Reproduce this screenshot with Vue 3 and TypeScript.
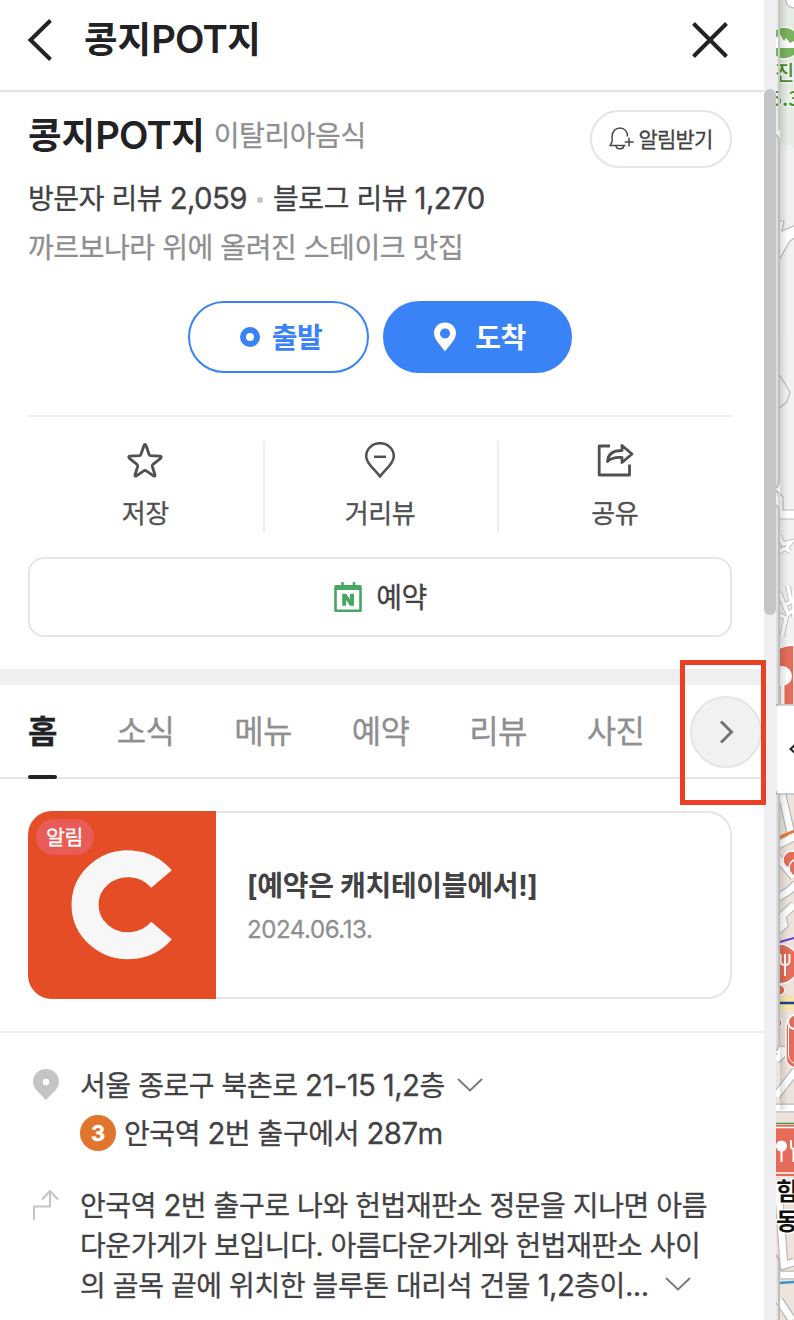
<script setup lang="ts">
import { h } from 'vue'

interface Tab {
  label: string
  active?: boolean
}

const latin = /([0-9A-Za-z][0-9A-Za-z,\-]*|\.{3})/

/** Text whose digits and Latin letters are set slightly larger than the Hangul. */
const Mixed = (props: { text: string }) =>
  h(
    'span',
    { class: 'mixed' },
    props.text
      .split(latin)
      .filter(Boolean)
      .map((part) => (latin.test(part) ? h('span', { class: 'latin' }, part) : part)),
  )
Mixed.props = ['text']

const placeName = '콩지POT지'

const tabs: Tab[] = [
  { label: '홈', active: true },
  { label: '소식' },
  { label: '메뉴' },
  { label: '예약' },
  { label: '리뷰' },
  { label: '사진' },
]

const directions: string[] = [
  '안국역 2번 출구로 나와 헌법재판소 정문을 지나면 아름',
  '다운가게가 보입니다. 아름다운가게와 헌법재판소 사이',
  '의 골목 끝에 위치한 블루톤 대리석 건물 1,2층이...',
]
</script>

<template>
  <div class="screen">
    <main class="panel">
      <header class="header">
        <svg class="back" width="28" height="44" viewBox="0 0 28 44">
          <path d="M24.500 2.500 4.500 22l20 19.500" fill="none" stroke="#222225" stroke-width="4" />
        </svg>
        <h1 class="name"><Mixed :text="placeName" /></h1>
        <svg class="close" width="36" height="36" viewBox="0 0 36 36">
          <path d="M1.5 1.5l33 33M34.5 1.5l-33 33" fill="none" stroke="#222225" stroke-width="4" />
        </svg>
      </header>

      <section class="summary">
        <div class="title-row">
          <h2 class="name"><Mixed :text="placeName" /></h2>
          <span class="category">이탈리아음식</span>
          <button class="notify">
            <svg width="26" height="26" viewBox="0 0 26 26" fill="none" stroke="#48484b" stroke-width="1.5">
              <path d="M18.6 10.5C18.4 5.2 15.300 2 10.900 2S3.200 5.300 3.100 10.500V15.500L1.200 19.400H16.500" />
              <path d="M7 19.800c.5 4 7.300 4 7.800 0M20 11.800v8.600M15.700 16.100h9" />
            </svg>
            <span>알림받기</span>
          </button>
        </div>
        <p class="reviews">
          <Mixed text="방문자 리뷰 2,059" /><i class="dot"></i><Mixed text="블로그 리뷰 1,270" />
        </p>
        <p class="intro">까르보나라 위에 올려진 스테이크 맛집</p>
        <div class="routes">
          <button class="route depart">
            <svg width="20" height="20" viewBox="0 0 20 20">
              <circle cx="10" cy="10" r="7" fill="none" stroke="#3a83f7" stroke-width="6" />
            </svg>
            <span>출발</span>
          </button>
          <button class="route arrive">
            <svg width="24" height="30" viewBox="0 0 24 30">
              <path d="M12 .5C5.700.5 1 5.200 1 11.200 1 17.500 8 23.500 12 29.500 16 23.500 23 17.500 23 11.200 23 5.200 18.300.5 12 .5Z" fill="#fff" />
              <circle cx="12" cy="11.500" r="5" fill="#3a83f7" />
            </svg>
            <span>도착</span>
          </button>
        </div>
      </section>

      <section class="actions">
        <div class="action">
          <svg width="36" height="36" viewBox="0 0 36 36" fill="none" stroke="#505053" stroke-width="2.800" stroke-linejoin="round">
            <path d="M18 2.500Q18.700 2.500 19.200 4L22 12.300Q22.400 13.600 23.700 13.700L33 14.200Q35.200 14.600 33.600 16.300L26 22.300Q25 23 25.300 24.300L28 33Q28.200 34.600 26.600 33.900L19.200 28.800Q18 28.200 16.800 28.800L9.400 33.900Q7.800 34.600 8 33L10.700 24.300Q11 23 10 22.300L2.400 16.300Q.8 14.600 3 14.200L12.300 13.700Q13.600 13.600 14 12.300L16.800 4Q17.300 2.500 18 2.500Z" />
          </svg>
          <span>저장</span>
        </div>
        <div class="action">
          <svg width="36" height="36" viewBox="0 0 36 36" fill="none" stroke="#505053" stroke-width="2.500">
            <path d="M18 1.200C10 1.200 4.200 7 4.200 14.400 4.200 21.800 13 27.500 18 34.500 23 27.500 31.800 21.800 31.800 14.400 31.800 7 26 1.200 18 1.200Z" />
            <path d="M12 14.800h12" />
          </svg>
          <span>거리뷰</span>
        </div>
        <div class="action">
          <svg width="38" height="36" viewBox="0 0 38 36" fill="none" stroke="#505053" stroke-width="2.800" stroke-linejoin="round">
            <path d="M14 4H3.200v29H33.500V22.500" />
            <path d="M26 3.500 36 12 26 20.500v-5C19.500 15 15 16 11.500 19.500 12 12.500 17 8.500 26 8.500Z" />
          </svg>
          <span>공유</span>
        </div>
      </section>

      <button class="booking">
        <svg width="28" height="32" viewBox="0 0 28 32">
          <path d="M1.500 6h25v23.700h-25Z" fill="#fff" stroke="#4aa663" stroke-width="2.600" stroke-linejoin="round" />
          <path d="M1 4h26v5H1Z" fill="#4aa663" />
          <path d="M8.500 1v4M20 1v4" stroke="#4aa663" stroke-width="2.500" />
          <path d="M8.200 12.700h4l3.800 5.600v-5.600h4v12h-4l-3.800-5.600v5.600h-4Z" fill="#4aa663" />
        </svg>
        <span>예약</span>
      </button>

      <nav class="tabs">
        <a v-for="tab in tabs" :key="tab.label" class="tab" :class="{ active: tab.active }"><span>{{ tab.label }}</span></a>
        <button class="next">
          <svg width="16" height="26" viewBox="0 0 16 26">
            <path d="M3 2.500 13.500 13 3 23.500" fill="none" stroke="#747477" stroke-width="3" />
          </svg>
        </button>
        <div class="highlight"></div>
      </nav>

      <section class="notice">
        <article class="card">
          <div class="thumb">
            <svg width="188" height="188" viewBox="0 0 188 188">
              <path d="M133.500 68A43 41 0 1 0 133.500 119.500" fill="none" stroke="#f7f7f7" stroke-width="27" />
            </svg>
            <span class="badge">알림</span>
          </div>
          <div class="card-body">
            <strong>[예약은 캐치테이블에서!]</strong>
            <time>2024.06.13.</time>
          </div>
        </article>
      </section>

      <section class="info">
        <div class="row">
          <svg class="lead" width="36" height="36" viewBox="0 0 36 36">
            <path d="M18 2C10.500 2 5 7.500 5 14.700 5 22 13 27 18 33.300 23 27 31 22 31 14.700 31 7.500 25.500 2 18 2Z" fill="#c5c5c8" />
            <circle cx="18" cy="15" r="3.200" fill="#fff" />
          </svg>
          <div class="lines">
            <p class="line address">
              <Mixed text="서울 종로구 북촌로 21-15 1,2층" />
              <svg width="26" height="16" viewBox="0 0 26 16"><path d="M1 2l12 11.500L25 2" fill="none" stroke="#77777a" stroke-width="1.800" /></svg>
            </p>
            <p class="line station"><b>3</b><Mixed text="안국역 2번 출구에서 287m" /></p>
          </div>
        </div>
        <div class="row guide">
          <svg class="lead" width="36" height="36" viewBox="0 0 36 36" fill="none" stroke="#c5c5c8" stroke-width="2">
            <path d="M6 34V20.500H22V5M14 13.500l8-8.500L30 13.500" />
          </svg>
          <div class="lines">
            <p v-for="(text, i) in directions" :key="text" class="line">
              <Mixed :text="text" />
              <svg v-if="i === directions.length - 1" width="26" height="16" viewBox="0 0 26 16"><path d="M1 2l12 11.500L25 2" fill="none" stroke="#77777a" stroke-width="1.800" /></svg>
            </p>
          </div>
        </div>
      </section>
    </main>

    <div class="scrollbar"><div class="thumb-bar"></div></div>

    <svg class="map" width="18" height="1320" viewBox="0 0 18 1320">
      <defs>
        <linearGradient id="edge" x1="0" x2="1" y1="0" y2="0">
          <stop offset="0" stop-color="#000" stop-opacity=".13" />
          <stop offset="1" stop-color="#000" stop-opacity="0" />
        </linearGradient>
      </defs>
      <rect width="18" height="1320" fill="#f1f2f0" />
      <path d="M0 0H18V148l-4-4-5 2-5-4-4 3Z" fill="#e5ede4" />
      <rect y="340" width="18" height="330" fill="#f2f2f2" />
      <rect y="790" width="18" height="530" fill="#ede3da" />
      <circle cx="18" cy="0" r="8" fill="#fff" stroke="#aaa" />
      <circle cx="8" cy="43" r="16" fill="#78b35b" stroke="#fff" stroke-width="1.500" />
      <path d="M0 48V38l4-4 4 7 2-3 4 5 4-2v7Z" fill="#fff" />
      <g class="park" stroke="#f4f8f2" stroke-width="3" paint-order="stroke">
        <text x="-1" y="80">진</text>
        <text x="-6" y="106">5.3</text>
      </g>
      <g fill="#fff" stroke="#bbb" stroke-width="1.200">
        <path d="M3 221h5l-2 10 14-6v12l-6 4-11 19Z" />
        <path d="M3 374l11 18-3 10-9 7" fill="#f2f2f2" />
        <path d="M0 490l7 7v13h12v9H3V497Z" />
      </g>
      <g fill="none" stroke="#c2c2c2" stroke-width="5.500">
        <path d="M3 535l4 9 8-2-5 7 5 3M3 552l6-4M3 592l9 22 7-5M9 605l6-3-3-16M4 615l6 3-4 18M18 590v28" />
      </g>
      <g fill="none" stroke="#fff" stroke-width="3.500">
        <path d="M3 535l4 9 8-2-5 7 5 3M3 552l6-4M3 592l9 22 7-5M9 605l6-3-3-16M4 615l6 3-4 18M18 590v28" />
      </g>
      <g fill="none" stroke="#b9b9b9" stroke-width="9">
        <path d="M5 790l11 48-16 8M0 899l14-9 6-6M2 858l16 19M2 930l6-5-2-9 12-11" />
        <path d="M0 1060l18-17M0 1050l18 1M0 1108h18M0 1096l22-28M2 1185l6 80 10-3M5 1275h13M3 1300l13 20" />
      </g>
      <g fill="none" stroke="#fff" stroke-width="6.500">
        <path d="M5 790l11 48-16 8M0 899l14-9 6-6M2 858l16 19M2 930l6-5-2-9 12-11" />
        <path d="M0 1060l18-17M0 1050l18 1M0 1108h18M0 1096l22-28M2 1185l6 80 10-3M5 1275h13M3 1300l13 20" />
      </g>
      <path d="M0 839l18-8" stroke="#e57a3c" stroke-width="3" />
      <path d="M0 943l18-5" stroke="#6b3bd0" stroke-width="2" />
      <path d="M0 1003h18" stroke="#f6e7a9" stroke-width="14" />
      <path d="M0 1003h18" stroke="#243c9b" stroke-width="2.500" />
      <g fill="#e46c58" stroke="#fff" stroke-width="1.500">
        <circle cx="4" cy="990" r="5" />
        <circle cx="16" cy="860" r="9" />
        <circle cx="22" cy="868" r="9" />
        <circle cx="3" cy="964" r="20" />
        <circle cx="0" cy="1023" r="6" />
        <rect x="10" y="1016" width="30" height="52" rx="10" />
      </g>
      <rect x="12.500" y="1018" width="30" height="46" rx="9" fill="none" stroke="#fff" />
      <circle cx="19" cy="1022" r="7" fill="#e46c58" stroke="#fff" stroke-width="2" />
      <path d="M4.500 954v7q0 4 4.500 4t4.500-4v-7M9 954v22" fill="none" stroke="#fff" stroke-width="2" />
      <path d="M3 648q7-3 15-3v60H3Z" fill="#e46c58" stroke="#fff" stroke-width="1.500" />
      <circle cx="6" cy="676" r="10" fill="#fff" />
      <path d="M6.500 680v25" stroke="#fff" stroke-width="4" />
      <path d="M0 1123.500h18" stroke="#45964d" stroke-width="1.500" />
      <path d="M0 1125h18v51H0Z" fill="#e46c58" />
      <path d="M0 1127.500h18M0 1173h18" stroke="#fff" stroke-width="1.500" />
      <circle cx="5.500" cy="1146" r="5.500" fill="#fff" />
      <path d="M5.500 1146v16M15 1140v6q0 3 3 3M17.500 1149v13" fill="none" stroke="#fff" stroke-width="2" />
      <g class="place" stroke="#fff" stroke-width="3" paint-order="stroke">
        <text x="0" y="1200">힘</text>
        <text x="0" y="1230">동</text>
      </g>
      <path d="M2 1283l16-1" stroke="#3b91cf" stroke-width="2.500" />
      <rect x="4" width="8" height="1110" fill="url(#edge)" />
      <path d="M3 0v130" stroke="#c5c7c3" stroke-width="2" />
      <path d="M0 135q3 2 3 6V480q0 6-3 8M0 505q3 2 3 6V705H0M0 793H3v250q0 5-3 8" fill="#dedede" stroke="#bcbcbc" stroke-width="2" />
      <path d="M0 1255q3 3 3 8v57" fill="none" stroke="#bcbcbc" stroke-width="2" />
      <rect x="1.500" y="705" width="17" height="88.500" fill="#fff" />
      <path d="M0 705h18M0 794h18" stroke="#aaa" stroke-width="1" />
      <path d="M20 744l-5.500 5 5.500 5" fill="none" stroke="#222" stroke-width="2" />
    </svg>
  </div>
</template>

<style>
body {
  margin: 0;
  background: #fff;
}
.mixed .latin {
  font-size: 1.05em;
  letter-spacing: -0.02em;
  line-height: 1;
}
</style>

<style scoped>
.screen {
  display: flex;
  width: 794px;
  height: 1320px;
  overflow: hidden;
  background: #fff;
  color: #424244;
  font-family: Inter, "Noto Sans CJK KR", sans-serif;
  font-size: 28px;
  letter-spacing: -0.42px;
  white-space: nowrap;
  -webkit-text-stroke: 0.3px currentColor;
}
h1, h2, p { margin: 0; }
svg { display: block; flex: none; }
button {
  box-sizing: border-box;
  padding: 0;
  background: #fff;
  color: inherit;
  font: inherit;
  letter-spacing: inherit;
  display: flex;
  align-items: center;
  justify-content: center;
}
.panel {
  width: 764px;
  height: 1320px;
  flex: none;
  overflow: visible;
}
.header {
  box-sizing: border-box;
  height: 92px;
  padding: 0 36px 10px 26px;
  display: flex;
  align-items: center;
  border-bottom: 2px solid #e3e3e3;
  box-shadow: 0 2px 3px rgba(0, 0, 0, 0.04);
}
.name {
  color: #222225;
  font-size: 36.5px;
  font-weight: 600;
  line-height: 52px;
  letter-spacing: 0;
  -webkit-text-stroke-width: 0;
}
.header .name { margin-left: 30px; }
.close { margin-left: auto; }
.summary { padding: 18px 32px 0 28px; }
.title-row {
  height: 58px;
  display: flex;
  align-items: flex-start;
}
.category {
  margin-left: 9px;
  line-height: 52px;
  color: #8f8f91;
}
.notify {
  width: 142px;
  height: 58px;
  margin-left: auto;
  gap: 3px;
  border: 2px solid #e5e5e5;
  border-radius: 29px;
  font-size: 21px;
  letter-spacing: -0.8px;
}
.notify span { margin-top: -3px; }
.reviews, .intro {
  height: 48px;
  line-height: 50px;
}
.reviews {
  margin-top: 7px;
  display: flex;
  align-items: center;
}
.dot {
  width: 6px;
  height: 6px;
  margin: 2px 10px 0;
  border-radius: 50%;
  background: #c5c5c8;
}
.intro { color: #8f8f91; }
.routes {
  margin-top: 30px;
  display: flex;
  justify-content: center;
  gap: 14px;
}
.route {
  height: 72px;
  border: 2px solid #3a83f7;
  border-radius: 36px;
  font-weight: 600;
  -webkit-text-stroke-width: 0;
}
.route span { margin-top: -3px; }
.depart {
  width: 181px;
  padding-left: 5px;
  gap: 12px;
  color: #3a83f7;
}
.arrive {
  width: 189px;
  padding-left: 4px;
  gap: 18px;
  background: #3a83f7;
  color: #fff;
}
.actions {
  margin: 42px 32px 0 28px;
  padding-top: 24px;
  border-top: 2px solid #efefef;
  display: flex;
}
.action {
  flex: 1;
  box-sizing: border-box;
  height: 92px;
  padding-top: 1px;
  display: flex;
  flex-direction: column;
  align-items: center;
  gap: 17px;
  color: #505053;
  font-size: 26px;
  line-height: 38px;
}
.action + .action {
  box-shadow: inset 2px 0 0 #efefef;
}
.booking {
  width: 704px;
  height: 80px;
  margin: 24px 0 0 28px;
  padding-left: 1px;
  gap: 14px;
  border: 2px solid #e5e5e5;
  border-radius: 16px;
}
.booking span { margin-top: -2px; }
.tabs {
  position: relative;
  box-sizing: border-box;
  height: 110px;
  margin-top: 32px;
  padding-left: 28px;
  border-top: 16px solid #efeff1;
  border-bottom: 2px solid #e5e5e5;
  display: flex;
  gap: 60px;
}
.tab {
  position: relative;
  line-height: 94px;
  height: 92px;
  font-size: 32px;
  letter-spacing: -0.7px;
  color: #8f8f91;
}
.tab.active {
  color: #222225;
  font-weight: 700;
}
.tab.active::after {
  content: "";
  position: absolute;
  left: 0;
  right: 0;
  bottom: -2px;
  height: 4px;
  border-radius: 2px;
  background: #222225;
}
.next {
  position: absolute;
  left: 690px;
  top: 11px;
  width: 72px;
  height: 72px;
  border: 2px solid #e5e5e5;
  border-radius: 50%;
  background: #f1f1f2;
}
.highlight {
  position: absolute;
  z-index: 2;
  box-sizing: border-box;
  left: 680px;
  top: -25px;
  width: 86px;
  height: 145px;
  border: 5px solid #ec4024;
}
.notice {
  padding: 32px 32px 32px 28px;
  border-bottom: 2px solid #efefef;
}
.card {
  height: 188px;
  border-radius: 24px;
  overflow: hidden;
  display: flex;
  box-shadow: inset 0 0 0 2px #e5e5e5;
}
.thumb {
  position: relative;
  width: 188px;
  background: #e54d26;
}
.badge {
  position: absolute;
  left: 8px;
  top: 8px;
  box-sizing: border-box;
  width: 58px;
  height: 36px;
  padding-right: 1px;
  border-radius: 18px;
  background: #e95b56;
  color: #fff;
  font-size: 20.5px;
  line-height: 37px;
  text-align: center;
}
.card-body {
  margin: 54px 0 0 31px;
  display: flex;
  flex-direction: column;
}
.card-body strong {
  font-weight: 700;
  line-height: 42px;
  letter-spacing: -0.3px;
  -webkit-text-stroke-width: 0;
}
.card-body time {
  font-size: 24px;
  line-height: 46px;
  color: #8f8f91;
}
.info { padding: 28px 0 0 28px; }
.row {
  display: flex;
  gap: 16px;
}
.row .lead { margin-top: 6px; }
.line {
  height: 48px;
  display: flex;
  align-items: center;
}
.address { gap: 12px; }
.address .mixed, .station .mixed { margin-top: -2px; }
.station b {
  width: 36px;
  height: 36px;
  margin-right: 8px;
  border-radius: 50%;
  background: #e0752d;
  color: #fff;
  font-size: 22px;
  font-weight: 700;
  line-height: 36px;
  text-align: center;
}
.guide { margin-top: 27px; }
.guide .lead { margin-top: 2px; }
.guide .line { height: 40px; }
.guide .line svg { margin-left: 16px; }
.scrollbar {
  width: 12px;
  flex: none;
  background: #efeff1;
}
.thumb-bar {
  height: 526px;
  margin-top: 89px;
  border-radius: 6px;
  background: #c4c5c7;
}
.map { overflow: hidden; }
.map text {
  font-family: "Noto Sans CJK KR", sans-serif;
  letter-spacing: 0;
  -webkit-text-stroke: 3px #fff;
}
.park text {
  fill: #4b8f31;
  font-size: 21px;
  font-weight: 500;
}
.place text {
  fill: #111;
  font-size: 24px;
  font-weight: 700;
}
</style>
